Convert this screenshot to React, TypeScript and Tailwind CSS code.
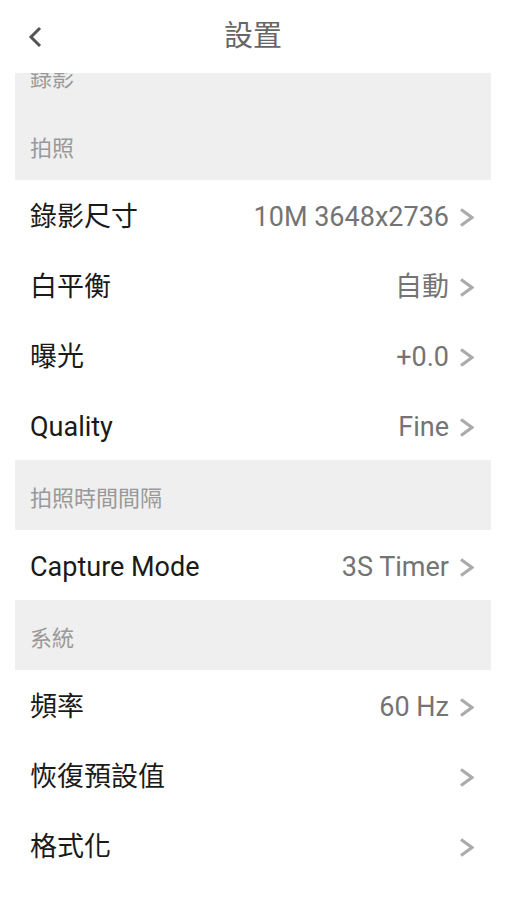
import React from "react"

const font = { fontFamily: "Roboto, 'Noto Sans CJK TC', sans-serif" }

type Item =
  | { kind: "section"; title: string }
  | { kind: "row"; label: string; value?: string }

const items: Item[] = [
  { kind: "section", title: "錄影" },
  { kind: "section", title: "拍照" },
  { kind: "row", label: "錄影尺寸", value: "10M 3648x2736" },
  { kind: "row", label: "白平衡", value: "自動" },
  { kind: "row", label: "曝光", value: "+0.0" },
  { kind: "row", label: "Quality", value: "Fine" },
  { kind: "section", title: "拍照時間間隔" },
  { kind: "row", label: "Capture Mode", value: "3S Timer" },
  { kind: "section", title: "系統" },
  { kind: "row", label: "頻率", value: "60 Hz" },
  { kind: "row", label: "恢復預設值" },
  { kind: "row", label: "格式化" },
]

function Chevron() {
  return (
    <svg width="15" height="19" viewBox="0 0 15 19" className="shrink-0">
      <path d="M2 1.5 L13 9.5 L2 17.5" fill="none" stroke="#ababab" strokeWidth="3.2" />
    </svg>
  )
}

function BackIcon() {
  return (
    <svg width="16" height="22" viewBox="0 0 16 22">
      <path d="M13 2 L4 11 L13 20" fill="none" stroke="#555" strokeWidth="3" />
    </svg>
  )
}

export default function App() {
  return (
    <div className="flex h-[900px] w-[506px] flex-col bg-white" style={font}>
      <div className="relative z-10 flex h-[73px] shrink-0 items-center justify-center bg-white">
        <button className="absolute left-[27px] top-[26px]">
          <BackIcon />
        </button>
        <span className="text-[29px] text-[#666] leading-none">設置</span>
      </div>
      <div className="flex-1 overflow-hidden px-[15px]">
        <div className="-mt-[33px] flex flex-col">
          {items.map((it, i) =>
            it.kind === "section" ? (
              <div key={i} className="flex h-[70px] items-center bg-[#efefef] px-[15px] pt-[6px]">
                <span className="text-[22px] text-[#999]">{it.title}</span>
              </div>
            ) : (
              <div key={i} className="flex h-[70px] items-center justify-between pl-[15px] pr-[17px] pt-[4px]">
                <span className="text-[27px] text-[#1a1a1a]">{it.label}</span>
                <div className="flex items-center gap-[10px]">
                  {it.value && <span className="text-[27px] text-[#747474]">{it.value}</span>}
                  <Chevron />
                </div>
              </div>
            )
          )}
        </div>
      </div>
    </div>
  )
}
